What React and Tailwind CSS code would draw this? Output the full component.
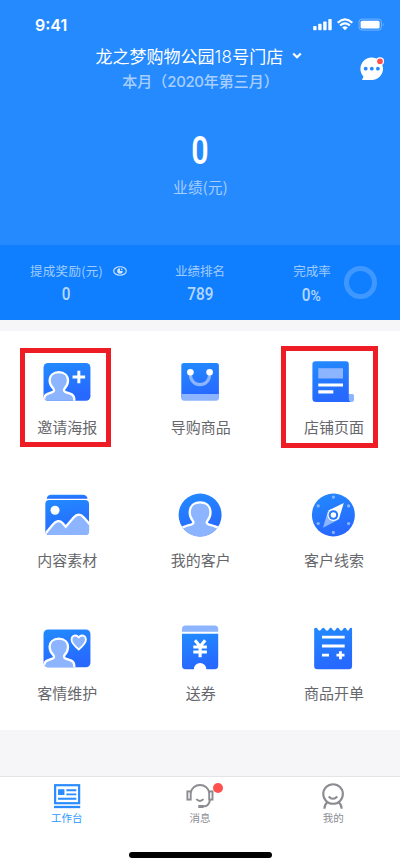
import React from "react";

const LIGHT = "#8db5ff";
const BLUE = "url(#blue)";

function Icon({ x, y, children }) {
  return (
    <svg width="60" height="52" viewBox={`${x} ${y} 60 52`} className="block">
      {children}
    </svg>
  );
}

function CardPerson() {
  return (
    <>
      <rect x="43.2" y="363" width="46.9" height="37.8" rx="4.5" fill={BLUE} />
      <path
        clipPath="url(#card)"
        d="M43.7 405V399.5Q43.7 395 48 393.6L52 392.2Q54.8 391 53 388.6Q49.3 385 49.3 380.6C49.3 375.5 53 372.2 58.5 372.2S67.7 375.5 67.7 380.6Q67.7 385 64.2 388.6Q62.8 391 65.3 392.2L69.8 393.6Q74 395 74 399.5V405Z"
        fill={LIGHT}
        stroke="#fff"
        strokeWidth="2.3"
      />
    </>
  );
}

const items = [
  {
    label: "邀请海报",
    x: 36.67,
    y: 357,
    art: (
      <>
        <CardPerson />
        <path d="M72.2 377H84.8M78.5 370.7V383.3" stroke="#fff" strokeWidth="3" />
      </>
    ),
  },
  {
    label: "导购商品",
    x: 170,
    y: 357,
    art: (
      <>
        <rect x="181.3" y="363" width="37.6" height="36" rx="2.5" fill={BLUE} />
        <path d="M181.3 394H218.9V398Q218.9 400.8 216 400.8H184.2Q181.3 400.8 181.3 398Z" fill={LIGHT} />
        <path d="M190.4 373V375A9.6 9.6 0 0 0 209.6 375V373" fill="none" stroke={LIGHT} strokeWidth="3.2" />
        <circle cx="190.4" cy="372.3" r="3.3" fill="#fff" />
        <circle cx="209.6" cy="372.3" r="3.3" fill="#fff" />
      </>
    ),
  },
  {
    label: "店铺页面",
    x: 303,
    y: 357,
    art: (
      <>
        <path d="M348.5 394H352.5Q354 394 354 395.5V399.5Q354 402 351.3 402H346Z" fill={LIGHT} />
        <path d="M312.4 364.3Q312.4 361.3 315.4 361.3H345.8Q348.8 361.3 348.8 364.3V399Q348.8 401 350.5 402H316Q312.4 402 312.4 398.5Z" fill={BLUE} />
        <path d="M318.3 368.2H343V378.5H318.3Z" fill={LIGHT} />
        <path d="M318.3 385H343M318.3 391.8H333.3" stroke="#fff" strokeWidth="3.2" />
      </>
    ),
  },
  {
    label: "内容素材",
    x: 36.67,
    y: 490,
    art: (
      <>
        <path d="M46.3 498.8Q47 494.8 51 494.8H82.5Q86.5 494.8 87.2 498.8Z" fill={BLUE} />
        <rect x="45" y="500" width="43.7" height="35" rx="4" fill={BLUE} />
        <circle cx="54.7" cy="510.2" r="4.5" fill="#fff" />
        <path
          clipPath="url(#photo)"
          d="M43.5 535.5L52.3 524.8Q57.8 518.5 62.2 523L65.4 526.7L73.3 517.6Q78.3 511.8 83.5 517.5L90 525V538H43.5Z"
          fill={LIGHT}
          stroke="#fff"
          strokeWidth="2.3"
        />
      </>
    ),
  },
  {
    label: "我的客户",
    x: 170,
    y: 490,
    art: (
      <>
        <circle cx="200.1" cy="515" r="21.5" fill={BLUE} />
        <path
          clipPath="url(#round)"
          d="M177 531Q182 526.5 191 524.6Q194.8 523.5 192.7 520.7Q189.7 517.2 189.7 512.5C189.7 506.2 193.9 502.4 200.1 502.4S210.5 506.2 210.5 512.5Q210.5 517.2 207.5 520.7Q205.4 523.5 209.2 524.6Q218 526.5 223 531V539H177Z"
          fill={LIGHT}
          stroke="#fff"
          strokeWidth="2.3"
        />
      </>
    ),
  },
  {
    label: "客户线索",
    x: 303,
    y: 490,
    art: (
      <>
        <circle cx="333.4" cy="515" r="21.5" fill={BLUE} />
        <g fill={LIGHT}>
          <circle cx="333.4" cy="497.1" r="1.6" />
          <circle cx="318.2" cy="505.9" r="1.6" />
          <circle cx="348.6" cy="505.9" r="1.6" />
          <circle cx="318.2" cy="523.5" r="1.6" />
          <circle cx="348.6" cy="523.5" r="1.6" />
          <circle cx="333.4" cy="532.4" r="1.6" />
          <path d="M323 527.7L328 510.7L338.7 519.4Z" />
        </g>
        <path d="M343.8 502.9L328.2 510.6L338.8 519.4Z" fill="#fff" />
        <circle cx="333.4" cy="515" r="6" fill="#fff" />
        <circle cx="333.4" cy="515" r="4.8" fill="#2679ff" />
        <circle cx="333.4" cy="515" r="2.7" fill="#fff" />
      </>
    ),
  },
  {
    label: "客情维护",
    x: 36.67,
    y: 623,
    art: (
      <>
        <g transform="translate(0 266.5)">
          <CardPerson />
        </g>
        <path
          d="M78.4 649.5C74.5 646.2 71.2 643.3 71.2 639.8C71.2 635.4 76 634 78.4 637.6C80.8 634 85.6 635.4 85.6 639.8C85.6 643.3 82.3 646.2 78.4 649.5Z"
          fill={LIGHT}
          stroke="#fff"
          strokeWidth="1.8"
          strokeLinejoin="round"
        />
      </>
    ),
  },
  {
    label: "送券",
    x: 170,
    y: 623,
    art: (
      <>
        <path d="M182 631.8V629Q182 625.4 185.5 625.4H214.7Q218.2 625.4 218.2 629V631.8Z" fill={LIGHT} />
        <path d="M182 633.8H218.2V665.8Q218.2 669.2 214.8 669.2H206.3A6.2 6.2 0 0 0 193.9 669.2H185.4Q182 669.2 182 665.8Z" fill={BLUE} />
        <path d="M195 640.3L200.1 646.5L205.2 640.3M193.3 647H206.9M193.3 652H206.9M200.1 646V657.3" fill="none" stroke="#fff" strokeWidth="3.1" />
      </>
    ),
  },
  {
    label: "商品开单",
    x: 303.33,
    y: 623,
    art: (
      <g transform="translate(0.3 0)">
        <path
          d="M314.2 629Q315 627 317 628Q319.5 633 322 628.6Q323.3 627 324.6 628.6Q327.2 633 329.4 628.6Q330.7 627 332 628.6Q334.2 633 336.4 628.6Q337.7 627 339 628.6Q341.3 633 343.5 628.6Q344.8 627 346.1 628.6Q348 633 350 628Q352 627 352.1 629V666Q352.1 669.2 348.9 669.2H317.4Q314.2 669.2 314.2 666Z"
          fill={BLUE}
        />
        <path d="M322 637.1H344.7M322 646H344.7M322 655.2H329M336.5 655.2H344.5M340.5 651.2V659.2" stroke="#fff" strokeWidth="2.8" />
      </g>
    ),
  },
];

function Defs() {
  return (
    <svg width="0" height="0" className="absolute">
      <defs>
        <linearGradient id="blue" x1="0" y1="0" x2="0.25" y2="1">
          <stop offset="0" stopColor="#228bff" />
          <stop offset="1" stopColor="#2768ff" />
        </linearGradient>
        <clipPath id="card">
          <rect x="43.2" y="363" width="46.9" height="37.8" rx="4.5" />
        </clipPath>
        <clipPath id="photo">
          <rect x="45" y="500" width="43.8" height="35" rx="4" />
        </clipPath>
        <clipPath id="round">
          <circle cx="200.1" cy="515" r="21.6" />
        </clipPath>
      </defs>
    </svg>
  );
}

function StatusIcons() {
  return (
    <svg width="72" height="14" viewBox="312 18 72 14">
      <g fill="#fff">
        <rect x="313.2" y="26" width="3.4" height="4.3" rx="0.8" />
        <rect x="318.2" y="23.8" width="3.4" height="6.5" rx="0.8" />
        <rect x="323.2" y="21.5" width="3.4" height="8.8" rx="0.8" />
        <rect x="328.3" y="18.9" width="3.4" height="11.4" rx="0.8" />
        <path d="M342.2 27.4Q345 25.3 347.8 27.4L345 30.3Z" />
        <rect x="360.6" y="20.8" width="19" height="7.6" rx="1.5" />
        <path d="M382.8 22.7Q384.4 24.5 382.8 26.4Z" fillOpacity="0.4" />
      </g>
      <path d="M337.7 22.7Q345 16 352.3 22.7M340.1 25.5Q345 21.2 349.9 25.5" fill="none" stroke="#fff" strokeWidth="2.2" />
      <rect x="359" y="19.1" width="22.4" height="11" rx="3" fill="none" stroke="#fff" strokeOpacity="0.35" />
    </svg>
  );
}

function ChatIcon() {
  return (
    <svg width="26" height="26" viewBox="358.5 56 26 26" className="block">
      <path d="M361.5 80L363 76.5A11.3 11.3 0 1 1 372 80Z" fill="#fff" />
      <g fill="#268aff">
        <circle cx="365.2" cy="68.7" r="1.9" />
        <circle cx="371.3" cy="68.7" r="1.9" />
        <circle cx="377.4" cy="68.7" r="1.9" />
      </g>
      <circle cx="379.5" cy="61.3" r="3.5" fill="#ff5050" stroke="#fff" strokeWidth="1.2" />
    </svg>
  );
}

function EyeIcon() {
  return (
    <svg width="14" height="10" viewBox="0 0 14 10" className="block">
      <ellipse cx="7" cy="5" rx="6.3" ry="4.3" fill="none" stroke="#fff" strokeWidth="1.1" />
      <path d="M7 2.2A2.8 2.8 0 1 0 9.8 5H7Z" fill="#fff" />
      <path d="M8 2.2A2.6 2.6 0 0 1 9.7 4H8Z" fill="#fff" />
    </svg>
  );
}

const tabs = [
  {
    label: "工作台",
    color: "text-[#2897ff]",
    x: 51.67,
    art: (
      <g stroke="#2b8cff" fill="none">
        <rect x="54.8" y="785.2" width="24" height="18" strokeWidth="2.2" />
        <path d="M53.7 807H79.9" strokeWidth="2.3" />
        <rect x="57.7" y="789.2" width="6.4" height="5.8" fill="#2b8cff" stroke="none" />
        <path d="M66 790.2H76M66 794.4H76M57.7 798.8H76" strokeWidth="1.9" />
      </g>
    ),
  },
  {
    label: "消息",
    color: "text-[#8c8d93]",
    x: 185,
    art: (
      <g stroke="#8b8c91" fill="none" strokeWidth="1.9">
        <rect x="187.4" y="791.4" width="3.3" height="8.2" />
        <rect x="209.2" y="791.4" width="3.3" height="8.2" />
        <path d="M190.6 792.8A9.5 9.1 0 0 1 209.4 792.8M210 800Q209 805.5 205 806.3H202" />
        <path d="M198.3 806.5H203.5" strokeWidth="3" />
        <path d="M196.3 799.2Q199.9 802.8 203.5 799.2" />
      </g>
    ),
  },
  {
    label: "我的",
    color: "text-[#8c8d93]",
    x: 318.33,
    art: (
      <g stroke="#8b8c91" fill="none" strokeWidth="2.1">
        <circle cx="333.4" cy="794" r="9.8" />
        <path d="M329 796.5Q333.3 801 337.6 796.5M327.8 802.2Q324.7 804.5 324.7 808.8M338.8 802.2Q342 804.5 342 808.8" />
      </g>
    ),
  },
];

const num = "font-['Roboto'] font-medium leading-5 text-[18px] text-white/70 inline-block scale-x-[0.85]";

export default function App() {
  return (
    <div className="relative flex h-[866px] w-[400px] flex-col overflow-hidden bg-[#f6f6f9] font-['Noto_Sans_CJK_SC',sans-serif]">
      <Defs />
      <header className="relative h-[245px] bg-[#268aff] text-center text-white">
        <div className="flex h-[44px] items-center justify-between pl-[35px] pr-4 pt-[5px]">
          <span className="font-['Inter'] text-[16px] font-semibold leading-5">9:41</span>
          <StatusIcons />
        </div>
        <div className="flex h-6 items-center pl-[95.5px]">
          <span className="whitespace-nowrap text-[17px] leading-6">
            龙之梦购物公园<span className="font-['Inter'] font-light tracking-[0.3px]">18</span>号门店
          </span>
          <svg width="10" height="8" viewBox="0 0 10 8" className="ml-[9px]">
            <path d="M1.2 1.5L5 5.3L8.8 1.5" fill="none" stroke="#fff" strokeWidth="2.2" />
          </svg>
        </div>
        <div className="mt-[3px] h-5 whitespace-nowrap pl-px text-[15px] font-medium leading-5 text-white/60">
          本月（<span className="font-['Inter'] tracking-[-0.4px]">2020</span>年第三月）
        </div>
        <div className="mt-[38px] h-[44px] font-['Roboto'] text-[38px] font-semibold leading-[44px]">
          <span className="inline-block scale-x-[0.8]">0</span>
        </div>
        <div className="mt-1 h-5 pl-px text-[14.5px] leading-5 tracking-[0.3px] text-white/60">业绩(元)</div>
        <div className="absolute left-[359px] top-[56px]">
          <ChatIcon />
        </div>
      </header>

      <section className="flex h-[75px] bg-[#107fff] pt-4 text-[12.5px] leading-5 text-white/60">
        <div className="w-[133px] pl-[30px]">
          <div className="flex items-center whitespace-nowrap">
            <span className="w-[74px] tracking-[0.3px]">提成奖励(元)</span>
            <span className="ml-[9px] opacity-80"><EyeIcon /></span>
          </div>
          <div className="mt-[3px] w-[72px] text-center"><span className={num}>0</span></div>
        </div>
        <div className="w-[134px] text-center">
          <div>业绩排名</div>
          <div className="mt-[3px]"><span className={num}>789</span></div>
        </div>
        <div className="w-[90px] text-center">
          <div>完成率</div>
          <div className="mt-1 flex items-baseline justify-center pr-[2px]">
            <span className={num}>0</span>
            <span className="-ml-px font-['Roboto'] text-[14px] font-medium leading-5 text-white/70">%</span>
          </div>
        </div>
        <div className="-ml-[13px] mt-[5px] size-[33px] rounded-full border-[5px] border-white/20" />
      </section>

      <main className="mt-[11px] grid h-[399px] grid-cols-3 grid-rows-3 bg-white">
        {items.map((it) => (
          <div key={it.label} className="flex flex-col items-center pt-[26px]">
            <Icon x={it.x} y={it.y}>{it.art}</Icon>
            <span className="mt-2 pl-[1.4px] text-[15px] leading-5 text-[#66676c]">{it.label}</span>
          </div>
        ))}
      </main>

      <nav className="mt-[46px] flex h-[90px] flex-col items-center border-t border-[#e4e4e8] bg-white">
        <div className="grid w-full grid-cols-3 pt-[3px]">
          {tabs.map((t) => (
            <div key={t.label} className="relative flex flex-col items-center">
              <svg width="30" height="30" viewBox={`${t.x} 780 30 30`} className="block">{t.art}</svg>
              <span className={`text-[10.5px] leading-4 ${t.color}`}>{t.label}</span>
              {t.label === "消息" && (
                <i className="absolute left-[80px] top-[2.5px] size-[10px] rounded-full bg-[#ff5050]" />
              )}
            </div>
          ))}
        </div>
        <div className="mt-[26px] h-[5.5px] w-[143px] rounded-full bg-black" />
      </nav>

      <div className="absolute left-[20px] top-[348px] h-[99px] w-[91px] border-[5px] border-[#ee1c25]" />
      <div className="absolute left-[281px] top-[346px] h-[102px] w-[97px] border-[5px] border-[#ee1c25]" />
    </div>
  );
}
